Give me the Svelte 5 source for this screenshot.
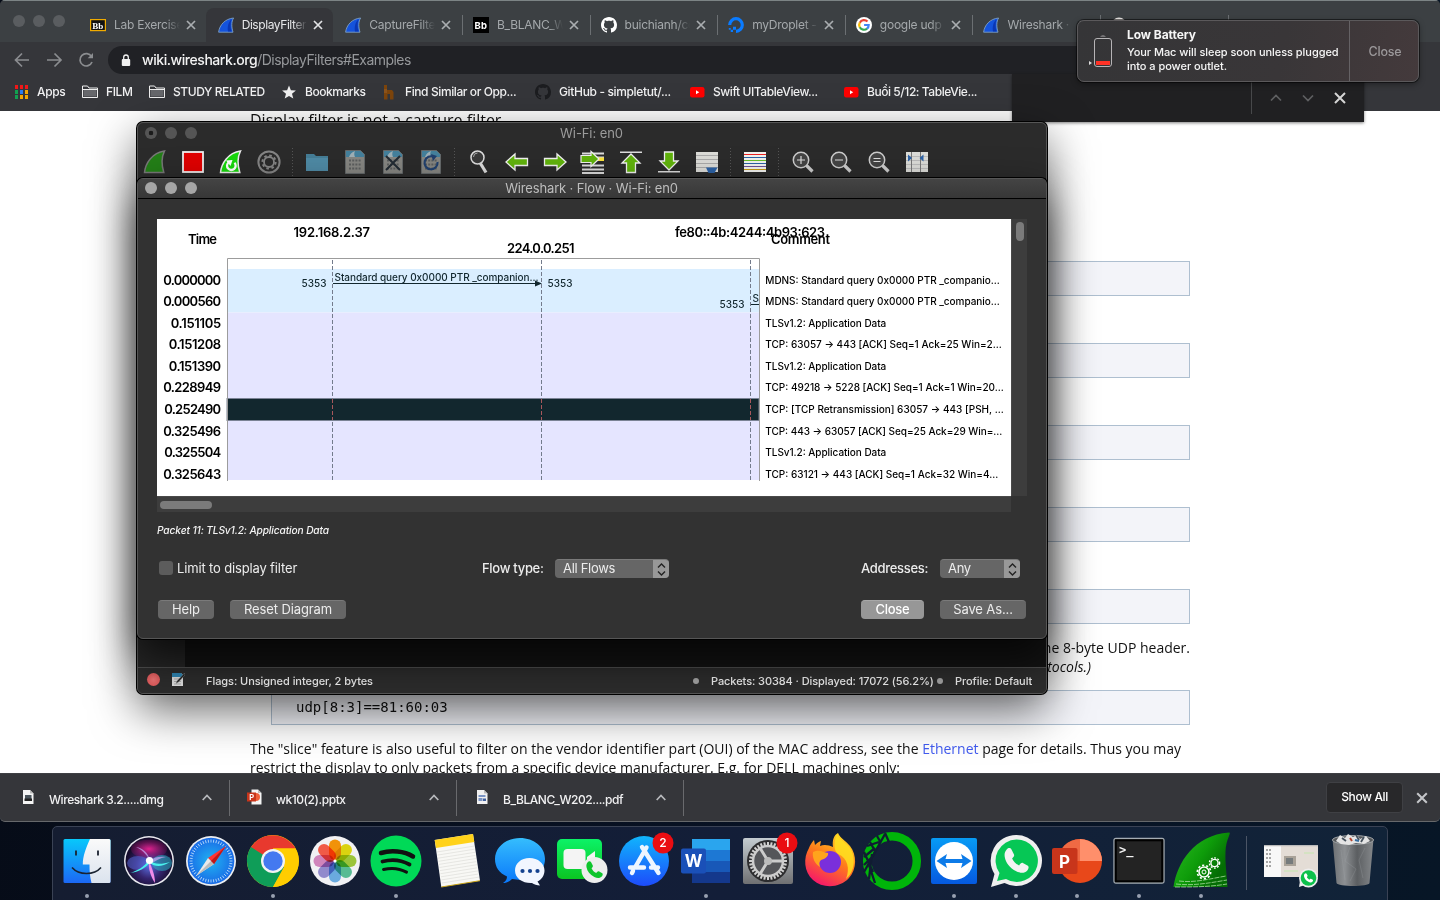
<script>
  const tabs = [
    { icon: 'bbGold', label: 'Lab Exercise' },
    { icon: 'fin', label: 'DisplayFilters', active: true },
    { icon: 'fin', label: 'CaptureFilters' },
    { icon: 'bb', label: 'B_BLANC_W2', sep: true },
    { icon: 'github', label: 'buichianh/co', sep: true },
    { icon: 'ocean', label: 'myDroplet - D', sep: true },
    { icon: 'google', label: 'google udp s', sep: true },
    { icon: 'fin', label: 'Wireshark · G', sep: true },
    { icon: 'disc', label: '', sep: true },
    { icon: 'none', label: '', sep: true }
  ];

  const bookmarks = [
    { icon: 'apps', label: 'Apps', w: 69, ls: -0.35 },
    { icon: 'folder', label: 'FILM', w: 67, ls: -0.4 },
    { icon: 'folder', label: 'STUDY RELATED', w: 132, ls: -0.42 },
    { icon: 'star', label: 'Bookmarks', w: 100, ls: -0.45 },
    { icon: 'brown', label: 'Find Similar or Opp...', w: 154, ls: -0.4 },
    { icon: 'githubDark', label: 'GitHub - simpletut/...', w: 154, ls: -0.35 },
    { icon: 'youtube', label: 'Swift UITableView...', w: 154, ls: -0.43 },
    { icon: 'youtube', label: 'Buổi 5/12: TableVie...', w: 150, ls: -0.44 }
  ];

  const tools = [
    'start', 'stop', 'restart', 'gear', '|',
    'open', 'file', 'fileClose', 'fileReload', '|',
    'find', 'left', 'right', 'goto', 'top', 'bottom', 'auto', '|',
    'colorize', '|',
    'zoomIn', 'zoomOut', 'zoomOne', 'columns'
  ];

  const packets = [
    { y: 66, t: '0.000000', c: 'MDNS: Standard query 0x0000 PTR _companio...', w: 234.5, tw: 58 },
    { y: 87, t: '0.000560', c: 'MDNS: Standard query 0x0000 PTR _companio...', w: 234.5, tw: 58 },
    { y: 109, t: '0.151105', c: 'TLSv1.2: Application Data', w: 121, tw: 50.5 },
    { y: 130, t: '0.151208', c: 'TCP: 63057 → 443 [ACK] Seq=1 Ack=25 Win=2...', w: 236.5, tw: 52.5 },
    { y: 152, t: '0.151390', c: 'TLSv1.2: Application Data', w: 121, tw: 52.5 },
    { y: 173, t: '0.228949', c: 'TCP: 49218 → 5228 [ACK] Seq=1 Ack=1 Win=20...', w: 238.5, tw: 58 },
    { y: 195, t: '0.252490', c: 'TCP: [TCP Retransmission] 63057 → 443 [PSH, ...', w: 238.5, tw: 57 },
    { y: 217, t: '0.325496', c: 'TCP: 443 → 63057 [ACK] Seq=25 Ack=29 Win=...', w: 237, tw: 58 },
    { y: 238, t: '0.325504', c: 'TLSv1.2: Application Data', w: 121, tw: 57 },
    { y: 260, t: '0.325643', c: 'TCP: 63121 → 443 [ACK] Seq=1 Ack=32 Win=4...', w: 233, tw: 58 }
  ];

  const downloads = [
    { icon: 'dmg', label: 'Wireshark 3.2.....dmg' },
    { icon: 'pptx', label: 'wk10(2).pptx' },
    { icon: 'pdf', label: 'B_BLANC_W202....pdf' }
  ];

  const dock = [
    ['finder', 1], ['siri'], ['safari'], ['chrome', 1], ['photos'], ['spotify', 1],
    ['notes'], ['messages'], ['call'], ['appstore'], ['word', 1], ['settings'],
    ['firefox'], ['anaconda'], ['teamviewer', 1], ['whatsapp', 1], ['powerpoint', 1],
    ['terminal', 1], ['wireshark', 1]
  ];

  const petals = [
    [0, '#ff9b0a'], [45, '#e8e010'], [90, '#a4d03c'], [135, '#5cc69a'],
    [180, '#70b4e8'], [225, '#9a92d6'], [270, '#dc8cc4'], [315, '#ff5f4a']
  ];
  const teeth = Array.from({ length: 32 }, (_, i) => i * 11.25);
  const ticks = Array.from({ length: 48 }, (_, i) => i * 7.5);
  const octocat =
    'M8 0C3.58 0 0 3.58 0 8c0 3.54 2.29 6.53 5.47 7.59.4.07.55-.17.55-.38 0-.19-.01-.82-.01-1.49-2.01.37-2.53-.49-2.69-.94-.09-.23-.48-.94-.82-1.13-.28-.15-.68-.52-.01-.53.63-.01 1.08.58 1.23.82.72 1.21 1.87.87 2.33.66.07-.52.28-.87.51-1.07-1.78-.2-3.64-.89-3.64-3.95 0-.87.31-1.59.82-2.15-.08-.2-.36-1.02.08-2.12 0 0 .67-.21 2.2.82.64-.18 1.32-.27 2-.27s1.36.09 2 .27c1.53-1.04 2.2-.82 2.2-.82.44 1.1.16 1.92.08 2.12.51.56.82 1.27.82 2.15 0 3.07-1.87 3.75-3.65 3.95.29.25.54.73.54 1.48 0 1.07-.01 1.93-.01 2.2 0 .21.15.46.55.38A8.01 8.01 0 0 0 16 8c0-4.42-3.58-8-8-8z';
  const handset =
    'M-8-9c1-1.600 3-1.800 4-.2l2 4c.4 1-.1 1.800-1.500 3.200 1.200 2.700 3.200 4.600 5.600 5.500 1-1.500 2-2.500 3-2l4 2.200c1 .6.600 2.500-.3 3.600-2.200 2.500-5.300 2.700-9 .9C-5.500 5.500-8.500 1.500-9.400-3.200c-.4-2.200 0-4.300 1.400-5.800z';
</script>

{#snippet small(name)}
  <svg class="fav" viewBox="0 0 16 16">
    {#if name === 'bbGold'}
      <rect x=".6" y="2.600" width="14.800" height="11" fill="#111" stroke="#f0ab00" stroke-width="1.200" />
      <text x="2.200" y="11.500" class="bbg">Bb</text>
    {:else if name === 'bb'}
      <rect width="16" height="16" fill="#000" />
      <text x="1.600" y="11.500" class="bbs">Bb</text>
    {:else if name === 'fin'}
      <path d="M.6 15.200C1.500 8 7 1.800 15.600 1c-2.200 3.600-2.300 8.500-.6 14.200z" fill="#1453dc" stroke="#7f9fc0" stroke-width=".9" />
      <path d="M10 14.500c-.8-5 .4-9.500 3.400-12-1.200 4-1.100 8 .2 12z" fill="#0a37b4" />
    {:else if name === 'github'}
      <path d={octocat} fill="#fff" />
    {:else if name === 'githubDark'}
      <path d={octocat} fill="#1c1d20" />
    {:else if name === 'ocean'}
      <path d="M8 14.300A6.300 6.300 0 1 0 1.700 8" fill="none" stroke="#0a7bff" stroke-width="3.200" />
      <path d="M5 9.800h3v3H5zM2.700 12.800H5V15H2.700zM.8 11h1.900v1.800H.8z" fill="#0a7bff" />
    {:else if name === 'google'}
      <circle cx="8" cy="8" r="8" fill="#fff" />
      <g fill="none" stroke-width="2.200">
        <path d="M11.500 4.600A4.800 4.800 0 0 0 3.800 5.700" stroke="#ea4335" />
        <path d="M3.800 5.600a4.900 4.900 0 0 0 0 4.800" stroke="#fbbc05" />
        <path d="M3.800 10.300a4.800 4.800 0 0 0 7.300 1.300" stroke="#34a853" />
        <path d="M11 11.700A4.700 4.700 0 0 0 12.700 8H8.100" stroke="#4285f4" />
      </g>
    {:else if name === 'disc'}
      <circle cx="8" cy="8" r="7.500" fill="#e9e6e4" /><circle cx="8" cy="8" r="4.500" fill="#a33" />
    {:else if name === 'apps'}
      {#each ['#f01818', '#f01818', '#f01818', '#12a150', '#2a7df0', '#f5a700', '#12a150', '#f5a700', '#f5a700'] as c, i}
        <rect x={2 + (i % 3) * 5} y={1 + Math.floor(i / 3) * 5} width="3" height="4" fill={c} />
      {/each}
    {:else if name === 'folder'}
      <path d="M.5 13.500V2h5l1.500 2h8.500v9.500z" fill="none" stroke="#eee" />
      <path d="M1.500 6h13v6.500h-13z" fill="#66676b" /><path d="M1 5.500h14" stroke="#eee" />
    {:else if name === 'star'}
      <path d="M8 1.500l1.900 4.700 5 .3-3.900 3.200 1.300 4.900L8 11.900l-4.300 2.700L5 9.700 1.100 6.500l5-.3z" fill="#f1f1f1" />
    {:else if name === 'brown'}
      <path d="M3 1h3v5h5l1.500 2v7.500H9V10H6.500v5.500H3z" fill="#7d450c" /><path d="M3 5h3v4H3z" fill="#8d531b" />
    {:else if name === 'youtube'}
      <rect x="1" y="3" width="14.500" height="10.500" rx="2.200" fill="#f00" /><path d="M7 6.300v3.900l3.200-1.950z" fill="#fff" />
    {:else if name === 'dmg'}
      <path d="M3 1h7l3.500 3.500V15H3z" fill="#f4f4f4" /><path d="M10 1v3.500h3.500" fill="#bbb" />
      <path d="M5 6h6.500v5.500H5z" fill="#4a545c" /><path d="M4.500 9.500h7.500v2.500H4.500z" fill="#222" />
    {:else if name === 'pptx'}
      <path d="M4.500 .5h6.500l3.500 3.500v11.500h-10z" fill="#f4f4f4" /><path d="M9 4a4 4 0 0 1 0 8z" fill="#f0603a" /><path d="M11 .5V4h3.500" fill="#bbb" />
      <rect x="0" y="3.500" width="9" height="9" fill="#c8351b" /><text x="2.200" y="10.600" class="pp">P</text>
    {:else if name === 'pdf'}
      <path d="M3 1h7l3.500 3.500V15H3z" fill="#f1f1f1" /><path d="M10 1v3.500h3.500" fill="#bbb" />
      <path d="M4.500 6h7v2h-7zM4.500 9h4v3h-4z" fill="#7a94c4" /><path d="M9 9.500h3V12H9z" fill="#3f5f9c" />
    {/if}
  </svg>
{/snippet}

{#snippet cross(size, color)}
  <svg class="cross" width={size} height={size} viewBox="0 0 10 10"><path d="M1 1l8 8M9 1L1 9" stroke={color} stroke-width="1.700" /></svg>
{/snippet}

{#snippet tool(name)}
  <svg class="tool" viewBox="0 0 26 26">
    {#if name === 'start'}
      <path d="M2.500 23.500C3.500 14 10 4 22.500 2c-3 6-3.300 13-.7 21.500z" fill="#237f17" stroke="#777" stroke-width="1.500" />
    {:else if name === 'stop'}
      <rect x="3" y="3" width="20" height="20" fill="#e00000" stroke="#eee" stroke-width="1.800" />
    {:else if name === 'restart'}
      <path d="M2.500 23.500C3.500 14 10 4 22.500 2c-3 6-3.300 13-.7 21.500z" fill="#18d80c" stroke="#eee" stroke-width="1.500" />
      <path d="M10.500 13.500a4.300 4.300 0 1 0 6 .3" fill="none" stroke="#fff" stroke-width="2.300" /><path d="M8 11.500l6.500-.5-2 6z" fill="#fff" />
    {:else if name === 'gear'}
      <circle cx="13" cy="13" r="10.600" fill="none" stroke="#858585" stroke-width="2" />
      <circle cx="13" cy="13" r="5" fill="none" stroke="#858585" stroke-width="1.800" />
      <circle cx="13" cy="13" r="6.600" fill="none" stroke="#858585" stroke-width="2" stroke-dasharray="2.600 2.580" />
    {:else if name === 'open'}
      <path d="M2 5h8l2 2h12v15H2z" fill="#457d96" /><path d="M2 9h22v13H2z" fill="#4f8aa5" />
    {:else if name === 'file' || name === 'fileClose' || name === 'fileReload'}
      <path d="M3.500 1.500h15l4 4v19h-19z" fill="#868682" stroke="#65696a" />
      <path d="M4 2h14.500l3.500 3.500V8H4z" fill="#44809c" /><path d="M7 8c1-3 3-5 6-6-1 2-1 4 0 6z" fill="#9fb0b6" />
      <path d="M7 11.500h12M7 15.500h12M7 19.500h12" stroke="#5c5e5e" stroke-width="2" stroke-dasharray="2 1.200" />
      {#if name === 'fileClose'}<path d="M6 7l14 14M20 7L6 21" stroke="#222b33" stroke-width="2" />{/if}
      {#if name === 'fileReload'}<path d="M16 8a6.500 6.500 0 1 0 3.500 5" fill="none" stroke="#21406e" stroke-width="2.200" /><path d="M13 5l6 2-4 5z" fill="#21406e" />{/if}
    {:else if name === 'find'}
      <circle cx="11.500" cy="8.500" r="6.500" fill="#3a3a3a" stroke="#ddd" stroke-width="1.500" /><path d="M7.500 8a4 4 0 0 1 4-4" stroke="#aaa" fill="none" />
      <path d="M14.500 14.500l5.500 9" stroke="#ddd" stroke-width="3.200" />
    {:else if name === 'left'}
      <path d="M2 13l9-8v4.500h12.500v7H11V21z" fill="#61b30c" stroke="#f1f1f1" stroke-width="1.300" />
    {:else if name === 'right'}
      <path d="M24 13l-9-8v4.500H2.500v7H15V21z" fill="#61b30c" stroke="#f1f1f1" stroke-width="1.300" />
    {:else if name === 'goto'}
      <path d="M2 4.500h22M2 8.500h22M2 16.500h22M2 20.500h22M2 24h22" stroke="#ddd" stroke-width="1.900" /><path d="M14 8.500h10v3.500H14z" fill="#fce43c" />
      <path d="M19 10L11 2.500v4H1v7h10v4z" fill="#61b30c" stroke="#f1f1f1" stroke-width="1.200" />
    {:else if name === 'top'}
      <path d="M2 3.300h22" stroke="#ddd" stroke-width="1.600" /><path d="M13 5l9 9h-4.500v9.500h-9V14H4z" fill="#61b30c" stroke="#f1f1f1" stroke-width="1.300" />
    {:else if name === 'bottom'}
      <path d="M2 22.700h22" stroke="#ddd" stroke-width="1.600" /><path d="M13 21l9-9h-4.500V3h-9v9H4z" fill="#61b30c" stroke="#f1f1f1" stroke-width="1.300" />
    {:else if name === 'auto'}
      <path d="M2 3h22v20H2z" fill="#dcdcd8" /><path d="M2 6.500h22M2 10.500h22M2 14.500h22M2 18.500h22" stroke="#aaa" /><path d="M12 18.500h11.500L20.500 24h-6z" fill="#2c62a6" />
    {:else if name === 'colorize'}
      <path d="M2 3h22v20H2z" fill="#f3f3f0" />
      {#each ['#e22', '#2c62a6', '#6abf2a', '#2c62a6', '#6c4f94', '#c79a10'] as c, i}
        <path d={`M2 ${5.500 + i * 3}h22`} stroke={c} />
      {/each}
    {:else if name === 'columns'}
      <path d="M2 3h22v20H2z" fill="#dcdcd8" /><path d="M2 7.500h22M2 11.500h22M2 15.500h22M2 19.500h22" stroke="#bbb" /><path d="M7.500 3v20M16.500 3v20" stroke="#777" />
      <path d="M4 5.500l4 3.500-4 3.500zM19.500 5.500L15.500 9l4 3.500z" fill="#2c62a6" />
    {:else}
      <circle cx="11" cy="11" r="7.700" fill="#444" stroke="#ccc" stroke-width="1.500" />
      <path d="M16.500 16.500l6 6" stroke="#ccc" stroke-width="3.200" />
      {#if name === 'zoomIn'}<path d="M7 11h8M11 7v8" stroke="#ddd" stroke-width="1.200" />
      {:else if name === 'zoomOut'}<path d="M7 11h8" stroke="#ddd" stroke-width="1.200" />
      {:else}<path d="M7.500 9.500h7M7.500 12.500h7" stroke="#ddd" stroke-width="1.200" />{/if}
    {/if}
  </svg>
{/snippet}

{#snippet app(name)}
  <svg class="app-icon" viewBox="0 0 62 62">
    {#if name === 'finder'}
      <rect x="7.500" y="9" width="47" height="44" rx="1.500" fill="url(#gFinder)" />
      <path d="M34 9C30 18 26.800 26 26.800 34.500h6.700c0 7 .4 12 2 18.500H53a1.500 1.500 0 0 0 1.500-1.500v-41A1.500 1.500 0 0 0 53 9z" fill="url(#gFace)" />
      <path d="M20 20.500v5M42 20.500v5" stroke="#1a2330" stroke-width="1.800" /><path d="M16 37.500c7 8 22 8 29 0" fill="none" stroke="#1a2330" stroke-width="1.600" />
    {:else if name === 'siri'}
      <circle cx="31" cy="31" r="25" fill="#e8e8ee" /><circle cx="31" cy="31" r="23.500" fill="url(#gSiri)" />
      <ellipse cx="31" cy="19" rx="18" ry="9.500" fill="url(#gPink)" />
      <ellipse cx="44" cy="33" rx="10" ry="8" fill="#2aa9c0" opacity=".6" />
      <ellipse cx="20" cy="33" rx="11" ry="7" fill="#5a6be0" opacity=".5" />
      <path d="M18 17c7 1 12 6 14 13 5-3 10-4 16-3-6 1-11 4-15 7-2-7-7-13-15-17z" fill="#c3a6f0" opacity=".75" />
      <path d="M12 43c7-2 14-6 19-13 4 4 11 5 21 2-8 5-15 5-20 1-5 5-11 9-20 10z" fill="#49f1ec" />
      <path d="M31 31c3 7 6 14 6 22-4-6-7-14-6-22z" fill="#f08be8" />
      <circle cx="31.500" cy="30.500" r="3.600" fill="#fff" />
    {:else if name === 'safari'}
      <circle cx="31" cy="31" r="25" fill="#eceef0" /><circle cx="31" cy="31" r="23.300" fill="url(#gSafari)" />
      {#each ticks as a}<path d="M31 9.500v3" stroke="#d8efff" stroke-width=".7" transform={`rotate(${a} 31 31)`} />{/each}
      <path d="M46 16L28 28l6 6z" fill="#f33" /><path d="M16 46l12-18 6 6z" fill="#e9e9e9" /><path d="M31 31l3 3-18 12z" fill="#bbb" /><path d="M31 31l3 3 12-18z" fill="#c01818" />
    {:else if name === 'chrome'}
      <circle cx="31" cy="31" r="26" fill="#ffcd00" />
      <path d="M31 31L8.500 18A26 26 0 0 1 53.500 18.500H31z" fill="#e8392e" /><path d="M31 31L9 17A26 26 0 0 0 31 57l11-20z" fill="#0f9d58" />
      <path d="M31 18.500h22.500A26 26 0 0 1 31 57l11.500-20z" fill="#ffcd00" />
      <circle cx="31" cy="31" r="12" fill="#f3f3f3" /><circle cx="31" cy="31" r="9.700" fill="#4479f0" />
    {:else if name === 'photos'}
      <circle cx="31" cy="31" r="25" fill="#f1f1f4" />
      {#each petals as [a, c]}<rect class="petal" x="25" y="9.500" width="12" height="20.500" rx="6" fill={c} transform={`rotate(${a} 31 31)`} />{/each}
      <circle cx="31" cy="31" r="1.500" fill="#fff" />
    {:else if name === 'spotify'}
      <circle cx="31" cy="31" r="25.500" fill="#00d957" />
      <g fill="none" stroke="#111" stroke-linecap="round"><path d="M16 23c10-3 23-2 32 3.500" stroke-width="4.500" /><path d="M17.500 31.500c9-2.500 19-1.500 27 3" stroke-width="3.800" /><path d="M18.500 39.500c8-2 16-1.200 23 2.600" stroke-width="3" /></g>
    {:else if name === 'notes'}
      <path d="M7.700 10L46 4l7 46.700L14.300 57z" fill="#f8f8f5" /><path d="M7.700 10L46 4l1.300 8L9 18z" fill="#ffd21a" />
      {#each [0, 1, 2, 3, 4, 5, 6, 7, 8, 9, 10] as i}<path d={`M${10 + i * .5} ${22 + i * 3.100}l37-5.900`} stroke="#dededa" stroke-width=".7" />{/each}
      <path d="M14.300 57L53 50.700" stroke="#c9a417" />
    {:else if name === 'messages'}
      <path d="M31 8c14 0 25 9 25 21S45 50 31 50l-8-1c-3 3-6 4-9 4 3-2 4-4 4-6.500C10 43 6 37 6 29 6 17 17 8 31 8z" fill="url(#gMsg)" />
      <path d="M40.500 28c8.500 0 15 5.500 15 12.500 0 5-3 9-7 11l2.500 4c-3 0-6-1-8-2.500-9 .5-17-4.500-17-12.500C26 33.500 32 28 40.500 28z" fill="#f2f6ff" />
      <g fill="#14418f"><circle cx="33.500" cy="41" r="2.100" /><circle cx="41" cy="41" r="2.100" /><circle cx="48.500" cy="41" r="2.100" /></g>
    {:else if name === 'call'}
      <rect x="6" y="9" width="45" height="40" rx="5" fill="url(#gCall)" /><rect x="12.500" y="19" width="22" height="20" rx="4" fill="#f4f4f4" /><path d="M36 27l8-6v16l-8-5z" fill="#f4f4f4" />
      <circle cx="43.500" cy="40" r="13" fill="#eee" /><path d={handset} transform="translate(43.500 40) scale(.85)" fill="#0fc52d" />
    {:else if name === 'appstore'}
      <circle cx="31" cy="31" r="25" fill="url(#gStore)" />
      <g stroke="#eef6ff" stroke-width="4.400" stroke-linecap="round"><path d="M33.500 17.500L22 37.500M29 17l16.500 26M17 37.500h14M38 37.500h7M20 41l-1 2" /></g>
    {:else if name === 'word'}
      <path d="M17 9h38v11H17z" fill="#2aa5ee" /><path d="M17 20h38v11H17z" fill="#1d78d4" /><path d="M17 31h38v11H17z" fill="#1858b8" /><path d="M17 42h38v11H17z" fill="#14388c" />
      <rect x="6" y="18.500" width="25" height="25" rx="2" fill="#1a50b8" /><text x="18.500" y="37" class="letter">W</text>
    {:else if name === 'settings'}
      <rect x="6" y="8" width="50" height="46" rx="2" fill="url(#gSet)" /><circle cx="31" cy="31" r="21" fill="#2c2c2e" />
      {#each teeth as a}<rect x="30" y="12" width="2" height="5" fill="#d0d0d0" transform={`rotate(${a} 31 31)`} />{/each}
      <circle cx="31" cy="31" r="15" fill="#55565a" stroke="#ccc" stroke-width="2.500" /><path d="M31 31h15M31 31l-8-13M31 31l-8 13" stroke="#ccc" stroke-width="3" /><circle cx="31" cy="31" r="4" fill="#bbb" />
    {:else if name === 'firefox'}
      <path d="M10 18c1-3 3-6 5-8l1 5c2-2 3-3 6-4l-1 5c4-2 9-1 13 1-1-7 1-12 5-14 2 5 8 8 12 13 7 9 7 23-1 32-9 10-26 11-36 2-9-8-10-22-4-32z" fill="url(#gFox)" />
      <path d="M38 4c2 5 9 9 13 14 6 9 5 24-4 31 4-10 2-21-8-25-5-4-4-13-1-20z" fill="#ffdf20" opacity=".85" />
      <circle cx="31" cy="32" r="11" fill="#7a2fdb" /><path d="M14 22c6-3 10 0 15 1 1 3-3 6-7 7-2 2-2 4-1 7-5-3-8-9-7-15z" fill="#ffa41c" />
    {:else if name === 'anaconda'}
      <circle cx="31" cy="31" r="24.800" fill="none" stroke="#00b50a" stroke-width="8.500" />
      <path d="M6 16l12-4M3 27l11-9M3 35l10-10M3 42L24 4M8 49L11 24M14 53L8 35M3 22l9 20M9 12l5 9M16 6l4 7M24 3l4 9" stroke="#101c32" stroke-width="2.300" />
    {:else if name === 'teamviewer'}
      <rect x="8" y="8" width="46" height="46" rx="2" fill="url(#gTeam)" /><circle cx="31" cy="31" r="19" fill="#fff" />
      <path d="M13.500 31l10.500-7-1.500 5h17L38 24l10.500 7L38 38l1.500-5h-17l1.500 5z" fill="#0d7be8" />
    {:else if name === 'whatsapp'}
      <path d="M31 5a25.500 25.500 0 1 1-11.500 48L6 57l3.500-13A25.500 25.500 0 0 1 31 5z" fill="#efefef" /><path d="M31.500 9.500a21.200 21.200 0 1 1-10.500 39.500L12 51l2.500-8A21.200 21.200 0 0 1 31.500 9.500z" fill="#06c755" />
      <path d={handset} transform="translate(31.500 31) scale(1.250)" fill="#f3f3f3" />
    {:else if name === 'powerpoint'}
      <circle cx="34" cy="31" r="22" fill="#e8481a" /><path d="M34 31V9a22 22 0 0 0-22 22z" fill="#ef6a44" /><path d="M34 31V9a22 22 0 0 1 22 22z" fill="#ff8f6b" />
      <rect x="6" y="18" width="25.500" height="26" rx="2" fill="#c8351b" /><text x="18.500" y="37.500" class="letter">P</text>
    {:else if name === 'terminal'}
      <rect x="6" y="8.500" width="50" height="44.500" rx="2" fill="#232323" stroke="#a5adb3" stroke-width="1.300" /><rect x="7.800" y="10.300" width="46.400" height="41" fill="none" stroke="#000" stroke-width="2" />
      <text x="11" y="24" class="prompt">&gt;_</text>
    {:else if name === 'wireshark'}
      <path d="M3.500 57C7 33 24 5 59 2.500c3 0-3 6-3.500 19C55 35 57 46 57.500 57z" fill="url(#gShark)" />
      <path d="M9 51c15 2 30-2 47-5M6 54c18 2 33-1 51-4M5 57c18 0 34 0 52-3" stroke="#a8dca0" fill="none" stroke-width=".8" stroke-dasharray="5 1" />
      <g fill="none" stroke="#fff"><circle cx="34" cy="42" r="5" stroke-width="1.600" /><circle cx="34" cy="42" r="6.700" stroke-width="1.600" stroke-dasharray="2.200 2" /><circle cx="34" cy="42" r="2" />
        <circle cx="44.500" cy="33" r="3.600" stroke-width="1.400" /><circle cx="44.500" cy="33" r="5.100" stroke-width="1.400" stroke-dasharray="1.800 1.500" /></g>
    {:else if name === 'window'}
      <path d="M4 15h54v32H4z" fill="#e4ddd6" /><path d="M4 15h17v32H4z" fill="#f8f8f8" /><path d="M4 15h54v1.200H4z" fill="#bbb" />
      <path d="M6 20h5M6 24h5M6 28h5M6 32h5M6 36h5" stroke="#555" stroke-dasharray="2 1" /><rect x="24" y="26" width="12" height="10" fill="#a9a298" /><rect x="26" y="28" width="7" height="6" fill="#767b7c" />
      <path d="M44 23h10M24 41h14" stroke="#c4e8ae" stroke-width="1.200" />
      <circle cx="48.500" cy="48" r="9.500" fill="#eee" /><path d="M40 51l-1 6 6-2z" fill="#eee" /><circle cx="48.500" cy="48" r="7.800" fill="#0cc14b" /><path d={handset} transform="translate(48.500 48) scale(.47)" fill="#fff" />
    {:else if name === 'trash'}
      <path d="M10.500 9h41l-4 44c-.3 4-32 4-33 0z" fill="url(#gTrash)" /><ellipse cx="31" cy="10" rx="20.500" ry="4.500" fill="#55585b" stroke="#9fa3a6" />
      <path d="M14 11l4-6 5 3 3-4 5 3 4-2 3 4 6-3 4 5-6 3-8-1-7 2-8-1z" fill="#e4e4e4" /><path d="M20 8l4 3M34 5l3 5M42 7l-3 5" stroke="#46515c" stroke-width="1.800" /><path d="M28 8l2 3" stroke="#b4452e" stroke-width="2" /><path d="M33 10l4 1" stroke="#356da0" stroke-width="2" />
      <path d="M19 20l4 30M28 17l-5 14 11 8-6 12M43 18l-6 12 4 18" stroke="#a3a7aa" stroke-width="1" opacity=".25" fill="none" />
    {/if}
    {#if name === 'appstore' || name === 'settings'}
      <circle cx="50" cy="13" r="10.500" fill="#ea0d12" /><text x="50" y="17.200" class="badge">{name === 'appstore' ? 2 : 1}</text>
    {/if}
  </svg>
{/snippet}

<svg class="defs" width="0" height="0">
  <defs>
    <linearGradient id="gFinder" x2="0" y2="1"><stop stop-color="#08c8fb" /><stop offset="1" stop-color="#1c68f5" /></linearGradient>
    <linearGradient id="gFace" x2="0" y2="1"><stop stop-color="#fafafa" /><stop offset="1" stop-color="#dbe3ee" /></linearGradient>
    <radialGradient id="gSiri" cy=".6"><stop stop-color="#5a6ee0" /><stop offset=".55" stop-color="#35246e" /><stop offset="1" stop-color="#150c2c" /></radialGradient>
    <radialGradient id="gPink"><stop stop-color="#e0208c" /><stop offset="1" stop-color="#a0156c" stop-opacity=".25" /></radialGradient>
    <radialGradient id="gSafari"><stop stop-color="#20b4f2" /><stop offset="1" stop-color="#1a6be6" /></radialGradient>
    <linearGradient id="gMsg" x2="0" y2="1"><stop stop-color="#35bdfd" /><stop offset="1" stop-color="#0a78fb" /></linearGradient>
    <linearGradient id="gCall" x2="0" y2="1"><stop stop-color="#0cf267" /><stop offset="1" stop-color="#0bc522" /></linearGradient>
    <linearGradient id="gStore" x2="0" y2="1"><stop stop-color="#10b5fd" /><stop offset="1" stop-color="#1d4bfa" /></linearGradient>
    <linearGradient id="gSet" x2="0" y2="1"><stop stop-color="#c4ccd1" /><stop offset="1" stop-color="#6f7072" /></linearGradient>
    <linearGradient id="gFox" x1=".8" x2=".3" y2="1"><stop stop-color="#ffe226" /><stop offset=".5" stop-color="#ff7a1a" /><stop offset="1" stop-color="#f5156c" /></linearGradient>
    <linearGradient id="gTeam" x2="0" y2="1"><stop stop-color="#079bf5" /><stop offset="1" stop-color="#0559e0" /></linearGradient>
    <linearGradient id="gShark" x2=".9" y2=".6"><stop stop-color="#2ebc24" /><stop offset=".6" stop-color="#0e9c0a" /><stop offset="1" stop-color="#046d04" /></linearGradient>
    <linearGradient id="gTrash" x2="1"><stop stop-color="#6d7073" /><stop offset=".3" stop-color="#8d9093" /><stop offset=".6" stop-color="#5b5e61" /><stop offset="1" stop-color="#85888b" /></linearGradient>
  </defs>
</svg>

<div class="desktop">
  <div class="browser">
    <div class="tabstrip">
      <div class="lights"><i></i><i></i><i></i></div>
      {#each tabs as t}
        <div class="tab" class:active={t.active} class:sep={t.sep}>
          {@render small(t.icon)}
          <span class="tab-label">{t.label}</span>
          {@render cross(10, t.active ? '#e2e3e5' : '#a9adb0')}
        </div>
      {/each}
    </div>
    <div class="toolbar">
      <svg width="108" height="33" viewBox="0 0 108 33" fill="none" stroke="#8b8d90" stroke-width="1.700">
        <path d="M29 18H16M22 11.500L15.500 18l6.500 6.500" /><path d="M47 18h13.500M54.500 11.500L61 18l-6.500 6.500" />
        <path d="M91.500 14.500a6.200 6.200 0 1 0 .5 5.500" /><path d="M93 11v5.300h-5.300z" fill="#8b8d90" stroke="none" />
      </svg>
      <div class="omnibox">
        <svg width="10" height="13" viewBox="0 0 10 13"><rect x=".8" y="5" width="8.400" height="7" rx="1" fill="#f1f1f1" /><path d="M2.700 5.500V3.300a2.300 2.300 0 0 1 4.600 0v2.200" fill="none" stroke="#f1f1f1" stroke-width="1.300" /></svg>
        <span class="url"><b>wiki.wireshark.org</b>/DisplayFilters#Examples</span>
      </div>
    </div>
    <div class="bookmarks">
      {#each bookmarks as b}
        <div class="bm" style:width="{b.w}px">{@render small(b.icon)}<span style:letter-spacing="{b.ls}px">{b.label}</span></div>
      {/each}
    </div>
    <div class="page">
      <div class="intro">Display filter is not a capture filter</div>
      <div class="codes"><pre></pre><pre></pre><pre></pre><pre></pre><pre></pre></div>
      <p class="header-note">the 8-byte UDP header.</p>
      <p class="protocols"><em>protocols.)</em></p>
      <pre class="last">udp[8:3]==81:60:03</pre>
      <p class="slice">The "slice" feature is also useful to filter on the vendor identifier part (OUI) of the MAC address, see the <a>Ethernet</a> page for details. Thus you may</p>
      <p class="slice two">restrict the display to only packets from a specific device manufacturer. E.g. for DELL machines only:</p>
    </div>
    <div class="shelf">
      {#each downloads as d}
        <div class="dl">
          {@render small(d.icon)}<span>{d.label}</span>
          <svg width="10" height="7" viewBox="0 0 10 7"><path d="M.7 6L5 1.500 9.300 6" fill="none" stroke="#b8babd" stroke-width="1.700" /></svg>
        </div>
      {/each}
      <div class="show-all">Show All</div>
      {@render cross(12, '#c4c6c9')}
    </div>
  </div>

  <div class="findbar">
    <svg width="100" height="32" viewBox="0 0 100 32" fill="none" stroke-width="1.700"><path d="M19 18.500l5-5 5 5M51 13.500l5 5 5-5" stroke="#5e5f61" /><path d="M83 11l10 10M93 11l-10 10" stroke="#d5d5d5" stroke-width="2" /></svg>
  </div>

  <div class="win main">
    <div class="titlebar"><div class="lights"><i class="edited"></i><i></i><i></i></div><span>Wi-Fi: en0</span></div>
    <div class="tools">
      {#each tools as n}
        {#if n === '|'}<span class="toolsep"></span>{:else}<span class="toolslot">{@render tool(n)}</span>{/if}
      {/each}
    </div>
    <div class="behind"></div>
    <div class="status">
      <i class="red"></i>
      <svg width="14" height="15" viewBox="0 0 14 15"><path d="M1 1h9l2 2v11H1z" fill="#ddd" /><path d="M1 1h9l2 2v2H1z" fill="#2f86b4" /><path d="M3 7h6M3 9.500h7M3 12h7" stroke="#aaa" /><path d="M13.500 1L6 9l-1 2.500L7.500 10 14 3z" fill="#222" stroke="#999" stroke-width=".4" /></svg>
      <span class="flags">Flags: Unsigned integer, 2 bytes</span>
      <i class="dot"></i><span class="count">Packets: 30384 · Displayed: 17072 (56.2%)</span>
      <i class="dot"></i><span class="profile">Profile: Default</span>
    </div>
  </div>

  <div class="win flow">
    <div class="titlebar"><div class="lights"><i></i><i></i><i></i></div><span>Wireshark · Flow · Wi-Fi: en0</span></div>
    <div class="scroller">
      <svg class="diagram" width="854" height="277" viewBox="0 0 854 277">
        <rect width="854" height="277" fill="#fff" />
        <rect x="70" y="50" width="532" height="43.500" fill="#daeeff" />
        <rect x="70" y="93.500" width="532" height="167.500" fill="#e5e5ff" />
        <rect x="70" y="179.500" width="532" height="22" fill="#12272e" stroke="#7b8395" />
        <path d="M70.500 262V39.500h532V262" fill="none" stroke="#9c9c9c" />
        {#each [175.500, 384.500, 593.500] as x}
          <path d={`M${x} 41v220`} stroke="#737b8c" stroke-dasharray="4 2" />
          <path d={`M${x} 180v21`} stroke="#12272e" /><path d={`M${x} 180v21`} stroke="#a8585c" stroke-dasharray="4 2" />
        {/each}
        <path d="M176 64.500h203M594 85.500h8" stroke="#12272e" /><path d="M378 61.500l7 3-7 3z" fill="#12272e" />
        <g class="head">
          <text x="31" y="25" textLength="29">Time</text><text x="136.500" y="18" textLength="76.500">192.168.2.37</text>
          <text x="350" y="34" textLength="67.500">224.0.0.251</text><text x="518" y="18" textLength="150">fe80::4b:4244:4b93:623</text>
          <text x="614" y="25" textLength="59">Comment</text>
          {#each packets as p}<text x={64.200 - p.tw} y={p.y} textLength={p.tw}>{p.t}</text>{/each}
        </g>
        <g class="row">
          {#each packets as p}<text x="608.300" y={p.y - 1} textLength={p.w}>{p.c}</text>{/each}
        </g>
        <g class="row msg">
          <text x="144.500" y="68" textLength="25">5353</text><text x="390.500" y="68" textLength="25">5353</text><text x="562.500" y="89" textLength="25">5353</text>
          <text x="177.500" y="62" textLength="204">Standard query 0x0000 PTR _companion...</text><text x="595.500" y="83">S</text>
        </g>
      </svg>
      <div class="vbar"><i></i></div>
      <div class="hbar"><i></i></div>
    </div>
    <div class="hint">Packet 11: TLSv1.2: Application Data</div>
    <div class="controls">
      <span class="check"></span><span class="limit">Limit to display filter</span>
      <span class="ftype">Flow type:</span>
      <div class="select wide">All Flows<b><svg width="9" height="13" viewBox="0 0 9 13"><path d="M1 4.500L4.500 1 8 4.500M1 8.500L4.500 12 8 8.500" fill="none" stroke="#222" stroke-width="1.400" /></svg></b></div>
      <span class="addr">Addresses:</span>
      <div class="select">Any<b><svg width="9" height="13" viewBox="0 0 9 13"><path d="M1 4.500L4.500 1 8 4.500M1 8.500L4.500 12 8 8.500" fill="none" stroke="#222" stroke-width="1.400" /></svg></b></div>
    </div>
    <div class="buttons">
      <div class="btn help">Help</div><div class="btn reset">Reset Diagram</div>
      <div class="btn close">Close</div><div class="btn save">Save As...</div>
    </div>
  </div>

  <div class="notice">
    <svg width="49" height="62" viewBox="0 0 49 62"><rect x="17.500" y="18.500" width="17" height="28" rx="2.500" fill="none" stroke="#b6b4b6" /><path d="M23 16.500q3-2 6 0z" fill="#b6b4b6" /><path d="M19 41h14v4H19z" fill="#ff3226" /><path d="M12 41l3 2-3 2z" fill="#ddd" /></svg>
    <div class="notice-text"><strong>Low Battery</strong><span class="l1">Your Mac will sleep soon unless plugged</span><span class="l2">into a power outlet.</span></div>
    <div class="notice-close">Close</div>
  </div>

  <div class="dock">
    {#each dock as [n, running]}
      <div class="slot">{@render app(n)}{#if running}<i></i>{/if}</div>
    {/each}
    <div class="dock-sep"></div>
    <div class="slot">{@render app('window')}</div>
    <div class="slot">{@render app('trash')}</div>
  </div>
</div>

<style>
  :global(body) { margin: 0; overflow: hidden; }
  .desktop { position: relative; width: 1440px; height: 900px; overflow: hidden; background: linear-gradient(100deg, #060b16, #081224 60%, #071626); font-family: Inter, "Liberation Sans", sans-serif; font-size: 12px; }
  .desktop * { box-sizing: border-box; white-space: nowrap; }
  .defs { position: absolute; }
  svg { flex: none; display: block; }
  .fav { width: 16px; height: 16px; }
  .petal { mix-blend-mode: multiply; }
  .bbg { font: 700 9px "Liberation Serif", serif; fill: #fff; }
  .bbs { font: 700 9.500px Inter, sans-serif; fill: #fff; }
  .pp { font: 700 7.500px Inter, sans-serif; fill: #fff; }
  .lights { display: flex; gap: 8px; }
  .lights i { width: 12px; height: 12px; border-radius: 50%; background: #5a5d60; }

  .browser { position: absolute; left: 0; top: 0; width: 1440px; height: 822px; display: flex; flex-direction: column; background: #35363a; border-radius: 5px; overflow: hidden; border-bottom: 1px solid #66686b; }
  .tabstrip { height: 42px; flex: none; display: flex; background: #3c4043; border-top: 1px solid #7c8485; }
  .tabstrip .lights { width: 78px; padding: 14px 0 0 13px; flex: none; }
  .tab { width: 127.650px; height: 34px; margin-top: 7px; padding: 0 10px 0 12px; flex: none; display: flex; align-items: center; position: relative; }
  .tab.active { background: #35363a; border-radius: 8px 8px 0 0; }
  .tab.sep { background: linear-gradient(#6b6f72, #6b6f72) 1px 7px / 1px 20px no-repeat; }
  .tab-label { width: 66px; margin: 0 6px 0 8px; overflow: hidden; color: #a4a8ab; font-size: 12px; line-height: 18px; letter-spacing: -.25px; mask-image: linear-gradient(90deg, #000 78%, transparent); }
  .active .tab-label { color: #e6e7e9; letter-spacing: -.42px; }
  .toolbar { height: 33px; flex: none; display: flex; }
  .omnibox { width: 1200px; height: 28px; margin-top: 4px; border-radius: 14px; background: #202125; display: flex; align-items: center; padding-left: 13px; gap: 11px; }
  .url { font-size: 14px; letter-spacing: -.54px; color: #96989b; line-height: 20px; }
  .url b { font-weight: 500; color: #f3f3f3; letter-spacing: -.44px; }
  .bookmarks { height: 36px; flex: none; display: flex; padding-left: 13px; align-items: center; padding-bottom: 3px; }
  .bm { display: flex; gap: 8px; align-items: center; color: #f1f1f2; font-weight: 500; flex: none; }

  .page { height: 662px; flex: none; background: #fff; padding: 0 250px; display: flex; flex-direction: column; font: 14px/19px "Open Sans", "Noto Sans", sans-serif; color: #111; overflow: hidden; }
  .intro { height: 150px; flex: none; font-size: 16px; line-height: 17px; padding-top: 1px; }
  .codes { display: flex; flex-direction: column; gap: 47px; }
  .page pre { margin: 0 0 0 21px; height: 35px; background: #f3f4f9; border: 1px solid #aebfd0; flex: none; font: 14px/33px "DejaVu Sans Mono", monospace; padding-left: 24px; }
  .page p { margin: 0; flex: none; height: 19px; }
  .page p.header-note { margin-top: 14px; text-align: right; }
  .protocols { padding-right: 99px; text-align: right; }
  .page pre.last { margin-top: 14px; margin-bottom: 14px; }
  .slice a { color: #415bf0; }
  .shelf { height: 48px; display: flex; align-items: center; border-top: 1px solid #3f4044; padding-left: 3px; }
  .dl { width: 227px; height: 36px; border-right: 1px solid #696a6d; display: flex; align-items: center; padding: 0 17px; color: #f1f1f2; font-weight: 500; letter-spacing: -.44px; flex: none; }
  .dl span { margin-left: 13px; margin-right: auto; padding-top: 3px; }
  .dl .fav { margin-top: -2px; }
  .show-all { margin-left: auto; margin-right: 13px; width: 77px; height: 31px; border-radius: 4px; background: #28282a; border: 1px solid #3f4044; color: #fff; display: grid; place-items: center; font-weight: 500; letter-spacing: -.4px; padding-bottom: 2px; }
  .shelf > :global(.cross) { margin-right: 12px; }

  .findbar { position: absolute; left: 1012px; top: 74px; width: 352px; height: 48px; background: #202022; box-shadow: 0 1px 3px rgba(0, 0, 0, .5); display: flex; justify-content: flex-end; padding: 8px 12px 0 0; }
  .findbar svg { border-left: 1px solid #47484a; width: 101px; }

  .win { position: absolute; left: 137px; width: 910px; box-shadow: 0 0 0 1px #000, 0 18px 42px rgba(0, 0, 0, .72); border-radius: 6px; overflow: hidden; display: flex; flex-direction: column; border: 1px solid #565656; font-weight: 500; }
  .main { top: 122px; height: 572px; background: #2b2b2b; box-shadow: 0 0 0 1px #000, 0 16px 46px rgba(0, 0, 0, .6); }
  .titlebar { height: 21px; flex: none; display: grid; grid-template-columns: 60px 1fr 60px; align-items: center; text-align: center; font-size: 13px; font-weight: 400; color: #9c9c9c; letter-spacing: -.08px; }
  .titlebar span { padding-bottom: 2px; margin-left: -1px; }
  .titlebar .lights { padding-left: 7px; margin-top: -1px; }
  .titlebar .lights i { background: #555; }
  .titlebar .lights .edited { background: radial-gradient(circle, #1b1b1b 2px, #555 2.600px); }
  .tools { height: 34px; flex: none; display: flex; margin-left: -2px; align-items: center; padding-top: 2px; }
  .toolslot { width: 38px; flex: none; display: grid; place-items: center; }
  .tool { width: 26px; height: 26px; }
  .toolsep { width: 10px; height: 28px; flex: none; background: repeating-linear-gradient(#555 0 1px, transparent 1px 3px) 4px 0 / 1px 28px no-repeat; }
  .behind { flex: 1; background: linear-gradient(90deg, #262626 47px, #131313 47px); }
  .status { height: 26px; flex: none; border-top: 1px solid #4e4e4e; display: flex; align-items: center; font-size: 11px; color: #ececec; padding-left: 9px; background: #2c2c2c; letter-spacing: -.06px; }
  .red { width: 13px; height: 13px; border-radius: 50%; background: radial-gradient(#ec7474, #d84e50); margin: -2px 11px 0 0; }
  .status svg { margin-top: -2px; }
  .flags { margin-left: 21px; width: 487px; }
  .dot { width: 6px; height: 6px; border-radius: 50%; background: #a2a2a2; }
  .count { margin-left: 12px; width: 226px; letter-spacing: -.08px; }
  .profile { margin-left: 12px; }

  .flow { top: 178px; height: 461px; background: #323232; }
  .flow .titlebar { height: 20px; background: linear-gradient(#444, #373737); border-bottom: 1px solid #000; color: #bdbdbd; letter-spacing: -.15px; }
  .flow .titlebar .lights i { background: #a6a6a6; }
  .scroller { margin: 20px 0 0 19px; display: grid; grid-template-columns: 854px 16px; grid-template-rows: 277px 16px; }
  .vbar, .hbar { background: #3d3d3d; }
  .vbar { border-left: 1px solid #4a4a4a; padding: 3px 0 0 4px; }
  .hbar { border-top: 1px solid #4a4a4a; padding: 4px 0 0 3px; }
  .vbar i { display: block; width: 8px; height: 19px; border-radius: 4px; background: #7b7b7b; }
  .hbar i { display: block; width: 52px; height: 8px; border-radius: 4px; background: #7b7b7b; }
  .head { font-size: 13px; font-weight: 600; fill: #000; }
  .row { font-size: 10px; font-weight: 500; fill: #000; }
  .msg { fill: #12272e; }
  .hint { margin: 11px 0 0 19px; font-size: 10.200px; line-height: 14px; font-style: italic; color: #f4f4f4; letter-spacing: -.12px; }
  .controls { margin-top: 21px; height: 20px; display: flex; align-items: center; font-size: 13px; color: #ececec; padding-left: 21px; font-weight: 400; letter-spacing: -.15px; }
  .check { width: 14px; height: 14px; border-radius: 3px; background: #5c5c5c; margin-right: 4px; }
  .limit { width: 305px; }
  .ftype { width: 73px; font-weight: 500; letter-spacing: -.3px; }
  .addr { width: 79px; margin-left: 192px; font-weight: 500; letter-spacing: -.3px; }
  .select { width: 80px; height: 19px; border-radius: 4px; background: #666; display: flex; justify-content: space-between; line-height: 16px; padding-left: 8px; overflow: hidden; border-top: 1px solid #7a7a7a; flex: none; letter-spacing: -.3px; margin-top: 1px; }
  .select.wide { width: 114px; }
  .select b { width: 16px; background: #989898; display: grid; place-items: center; }
  .buttons { margin: 22px 0 0 20px; display: flex; font-size: 13px; font-weight: 400; letter-spacing: -.12px; color: #ececec; }
  .btn { height: 19px; border-radius: 4px; background: #666; border-top: 1px solid #7a7a7a; text-align: center; line-height: 17px; }
  .help { width: 56px; }
  .reset { width: 116px; margin-left: 16px; }
  .close { width: 63px; margin-left: 515px; background: #979797; border-color: #a8a8a8; color: #fff; font-weight: 500; letter-spacing: -.3px; }
  .save { width: 86px; margin-left: 16px; }

  .notice { position: absolute; left: 1077px; top: 20px; width: 342px; height: 62px; border-radius: 7px; background: linear-gradient(100deg, #353537, #393638 60%, #443a3c); border: 1px solid #5b595b; box-shadow: 0 0 0 1px rgba(0, 0, 0, .5), 0 2px 6px rgba(0, 0, 0, .4); display: flex; }
  .notice svg { margin: -1px 0 0 -1px; }
  .notice-text { width: 224px; flex: none; padding-top: 7px; color: #f6f6f6; display: flex; flex-direction: column; line-height: 14px; font-size: 11px; font-weight: 500; border-right: 1px solid #656265; padding-left: 1px; letter-spacing: -.05px; }
  .notice-text strong { font-size: 12px; font-weight: 700; margin-bottom: 3px; line-height: 14px; letter-spacing: -.06px; }
  .notice-close { flex: 1; display: grid; place-items: center; font-size: 12.500px; font-weight: 500; color: #9c999b; letter-spacing: -.2px; padding-left: 2px; }

  .dock { position: absolute; left: 52px; top: 826px; width: 1336px; height: 76px; background: linear-gradient(90deg, #151d31, #131e38 50%, #112338); border: 1px solid #3a4254; border-radius: 5px 5px 0 0; display: flex; padding-left: 3px; }
  .slot { width: 61.920px; flex: none; display: flex; flex-direction: column; align-items: center; padding-top: 3px; }
  .app-icon { width: 62px; height: 62px; }
  .slot i { width: 4px; height: 4px; border-radius: 50%; background: #98a0b0; margin-top: 2px; }
  .dock-sep { width: 28px; height: 54px; margin-top: 9px; flex: none; background: linear-gradient(#4b5566, #4b5566) 14px 0 / 1px 54px no-repeat; }
  .letter { font: 700 17px Inter, sans-serif; fill: #fff; text-anchor: middle; }
  .prompt { font: 700 12px "DejaVu Sans Mono", monospace; fill: #f3f3f3; }
  .badge { font: 500 12px Inter, sans-serif; fill: #fff; text-anchor: middle; }
</style>
